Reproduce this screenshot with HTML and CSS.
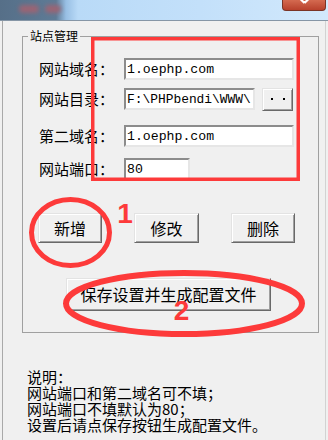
FILE: index.html
```html
<!DOCTYPE html>
<html lang="zh-CN">
<head>
<meta charset="utf-8">
<title>站点管理</title>
<link rel="stylesheet" href="styles.css">
</head>
<body>
<div class="titlebar">
  <span class="blur-title"><span class="blob blob-a"></span><span class="blob blob-b"></span></span>
  <span class="close">
    <svg width="44" height="11" viewBox="0 0 44 11"><path d="M17 -3 L23 3 M29 -3 L23 3" stroke="#fff" stroke-width="2.2" fill="none"/></svg>
  </span>
</div>
<div class="topline"></div>
<div class="window">
  <fieldset class="group">
    <legend class="legend">站点管理</legend>
    <div class="row row-1">
      <span class="label">网站域名：</span>
      <input class="field field-wide" type="text" value="1.oephp.com">
    </div>
    <div class="row row-2">
      <span class="label">网站目录：</span>
      <input class="field field-dir" type="text" value="F:\PHPbendi\WWW\">
      <button class="btn btn-browse" type="button"><span class="dot"></span><span class="dot"></span></button>
    </div>
    <div class="row row-3">
      <span class="label">第二域名：</span>
      <input class="field field-wide" type="text" value="1.oephp.com">
    </div>
    <div class="row row-4">
      <span class="label">网站端口：</span>
      <input class="field field-port" type="text" value="80">
    </div>
    <div class="actions">
      <button class="btn btn-action" type="button">新增</button>
      <button class="btn btn-action btn-mid" type="button">修改</button>
      <button class="btn btn-action" type="button">删除</button>
    </div>
    <div class="save-row">
      <button class="btn btn-save" type="button">保存设置并生成配置文件</button>
    </div>
  </fieldset>
  <div class="info">
    <div>说明：</div>
    <div>网站端口和第二域名可不填；</div>
    <div>网站端口不填默认为80；</div>
    <div>设置后请点保存按钮生成配置文件。</div>
  </div>
</div>
<svg class="marks" width="328" height="440" viewBox="0 0 328 440">
  <rect x="92.75" y="38.75" width="205.5" height="140.5" fill="none" stroke="#fd3a3a" stroke-width="3.5"/>
  <ellipse cx="70.5" cy="232.5" rx="39" ry="33" fill="none" stroke="#fd3a3a" stroke-width="5"/>
  <ellipse cx="184" cy="303.5" rx="118" ry="30.5" fill="none" stroke="#fd3a3a" stroke-width="6"/>
  <text x="125" y="223" class="mark-num">1</text>
  <text x="181.5" y="320" class="mark-num">2</text>
</svg>
</body>
</html>
```
FILE: styles.css
```css
html, body {
  margin: 0;
  padding: 0;
}
body {
  width: 328px;
  height: 440px;
  overflow: hidden;
  position: relative;
  background: #f0f0f0;
  font-family: "Noto Sans CJK SC", "Noto Sans", sans-serif;
  color: #000;
}
.titlebar {
  height: 20px;
  display: flex;
  background: linear-gradient(to right, #566f88 0, #5e7b96 56px, #98bfe4 66px, #b9daf7 78px, #c3e0fa 200px, #d2e9fc 328px);
}
.blur-title {
  display: flex;
  gap: 6px;
  margin: 5px 0 0 19px;
  height: 8px;
}
.blob {
  display: block;
  height: 8px;
  border-radius: 4px;
  background: #9a6474;
  filter: blur(2px);
}
.blob-a { width: 20px; }
.blob-b { width: 16px; }
.close {
  margin-left: auto;
  margin-right: 2px;
  width: 44px;
  height: 11px;
  box-sizing: border-box;
  border: 1px solid #7a3426;
  border-top: none;
  border-radius: 0 0 4px 4px;
  background: linear-gradient(#d46a50, #b8412c);
  overflow: hidden;
  display: flex;
}
.close svg {
  margin-left: -1px;
}
.topline {
  height: 1px;
  background: #8696a6;
}
.window {
  margin: 0 2px;
  border-left: 1px solid #a9a9a9;
  border-right: 1px solid #d2d2d2;
  height: 419px;
  padding: 8px 0 0 19px;
}
.group {
  width: 297px;
  box-sizing: border-box;
  margin: 0;
  padding: 0 0 21px 0;
  border: 1px solid #a0a0a0;
  min-width: 0;
}
.legend {
  font-size: 12px;
  line-height: 14px;
  padding: 0 2px;
  margin-left: 5px;
}
.row {
  display: flex;
  align-items: flex-start;
  padding-left: 16px;
  height: 22px;
}
.row-1 { margin-top: 15px; }
.row-2 { margin-top: 8px; height: 23px; }
.row-3 { margin-top: 14px; }
.row-4 { margin-top: 11px; }
.label {
  width: 85px;
  font-size: 15px;
  line-height: 22px;
  white-space: nowrap;
}
.field {
  box-sizing: border-box;
  height: 22px;
  margin: 0;
  padding: 0 0 0 1px;
  background: #fff;
  border: 2px solid;
  border-color: #8c8c8c #e6e6e6 #e6e6e6 #8c8c8c;
  font-family: "Liberation Mono", monospace;
  font-size: 13.2px;
  color: #000;
  outline: none;
}
.field-wide { width: 170px; }
.field-dir { width: 131px; font-size: 12.9px; }
.field-port { width: 66px; }
.btn {
  box-sizing: border-box;
  margin: 0;
  padding: 0;
  background: #f0f0f0;
  border: 1px solid;
  border-color: #e3e3e3 #696969 #696969 #e3e3e3;
  box-shadow: inset 1px 1px #fff, inset -1px -1px #a0a0a0;
  font-family: "Noto Sans CJK SC", "Noto Sans", sans-serif;
  color: #000;
}
.btn-browse {
  width: 31px;
  height: 23px;
  margin-left: 7px;
  display: flex;
  align-items: center;
  justify-content: center;
  gap: 10px;
  padding-bottom: 1px;
}
.dot {
  display: block;
  width: 2px;
  height: 2px;
  background: #000;
}
.actions {
  display: flex;
  gap: 32px;
  padding-left: 15px;
  margin-top: 33px;
}
.btn-action {
  width: 64px;
  height: 30px;
  font-size: 16px;
  line-height: 28px;
}
.btn-mid { width: 65px; }
.save-row {
  display: flex;
  padding-left: 43px;
  margin-top: 35px;
}
.btn-save {
  width: 205px;
  height: 33px;
  font-size: 16px;
  line-height: 31px;
}
.info {
  margin: 36px 0 0 5px;
  font-size: 15px;
  line-height: 16px;
  white-space: nowrap;
}
.marks {
  position: absolute;
  left: 0;
  top: 0;
  pointer-events: none;
}
.mark-num {
  fill: #fd3a3a;
  font-family: "Liberation Sans", Arial, sans-serif;
  font-weight: bold;
  font-size: 28px;
  text-anchor: middle;
}
```
